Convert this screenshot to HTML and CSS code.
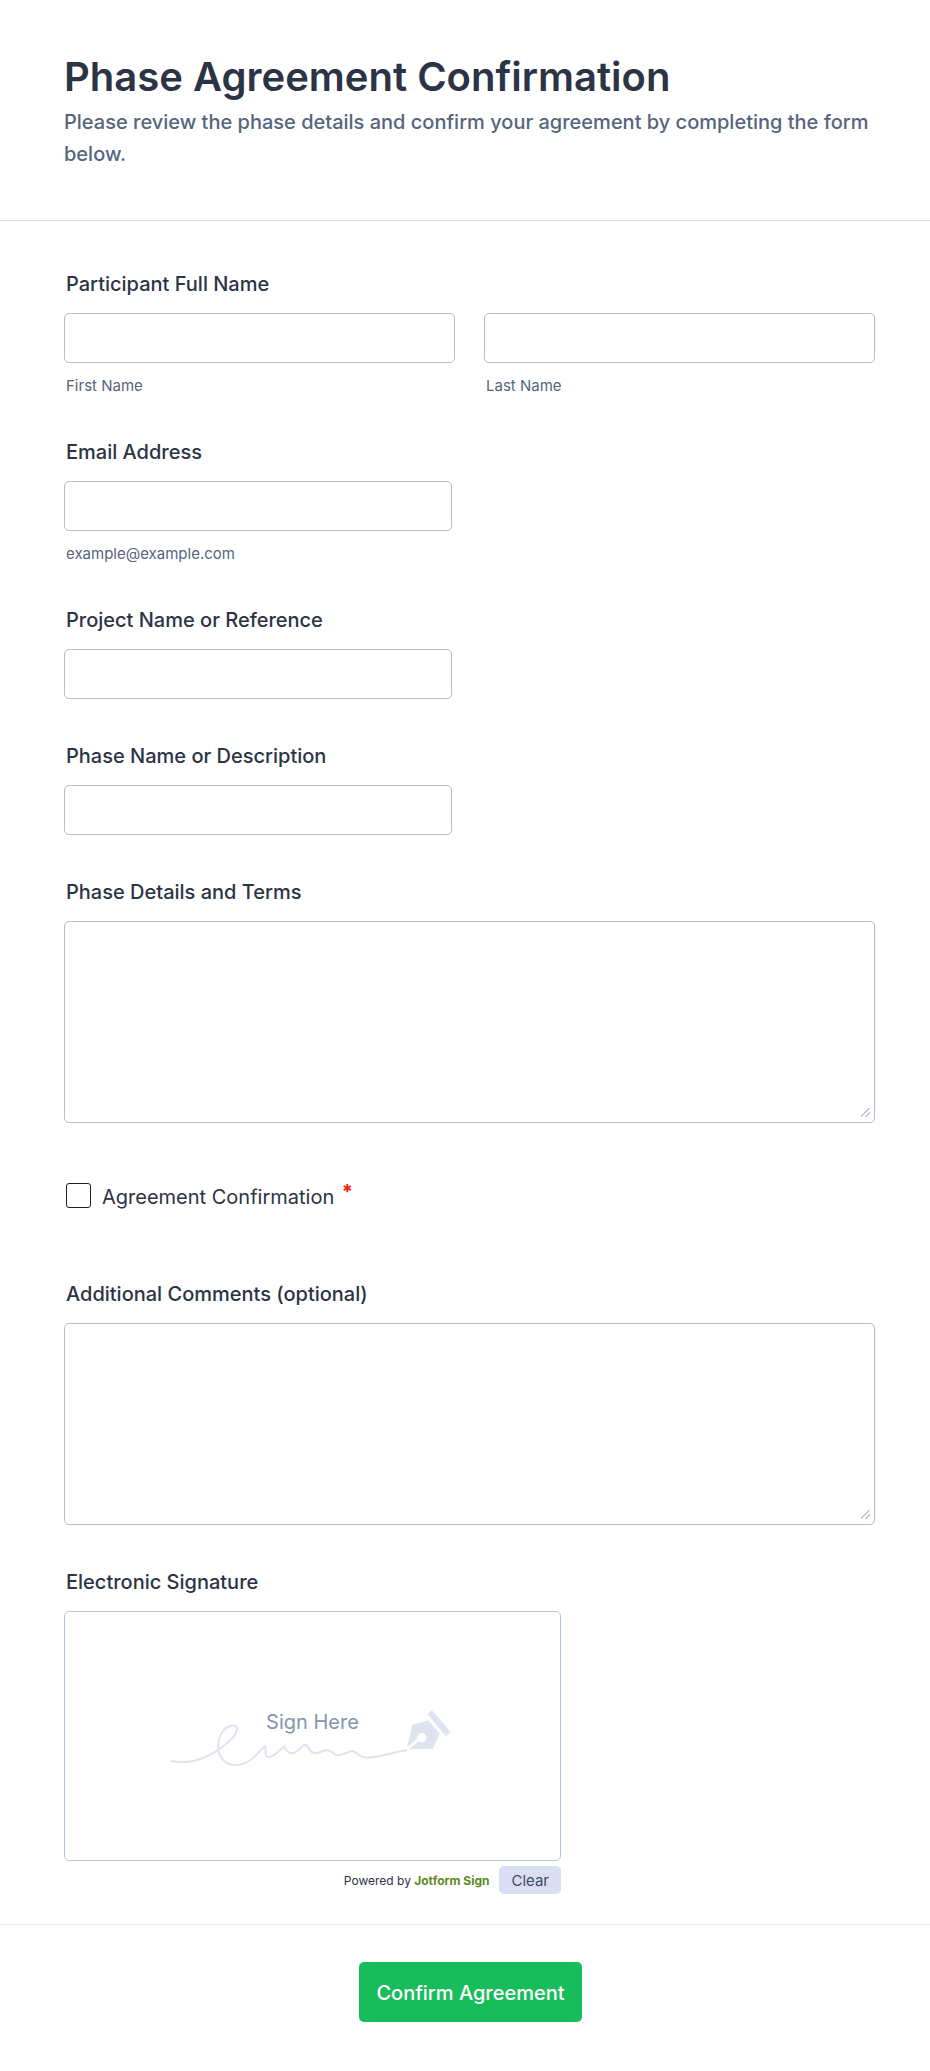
FILE: index.html
```html
<!DOCTYPE html>
<html lang="en">
<head>
  <meta charset="UTF-8">
  <meta name="viewport" content="width=device-width, initial-scale=1.0">
  <title>Phase Agreement Confirmation</title>
  <link rel="stylesheet" href="styles.css">
</head>
<body>
  <form id="agreementForm">
    <header class="form-header">
      <h1>Phase Agreement Confirmation</h1>
      <p>Please review the phase details and confirm your agreement by completing the form below.</p>
    </header>

    <div class="form-body">
      <fieldset class="field">
        <legend class="label">Participant Full Name</legend>
        <div class="name-row">
          <div>
            <input type="text" id="first" name="first">
            <label class="sub-label" for="first">First Name</label>
          </div>
          <div>
            <input type="text" id="last" name="last">
            <label class="sub-label" for="last">Last Name</label>
          </div>
        </div>
      </fieldset>

      <div class="field">
        <label class="label" for="email">Email Address</label>
        <input class="half" type="email" id="email" name="email" aria-describedby="email-hint">
        <span class="sub-label" id="email-hint">example@example.com</span>
      </div>

      <div class="field">
        <label class="label" for="project">Project Name or Reference</label>
        <input class="half" type="text" id="project" name="project">
      </div>

      <div class="field">
        <label class="label" for="phase">Phase Name or Description</label>
        <input class="half" type="text" id="phase" name="phase">
      </div>

      <div class="field">
        <label class="label" for="details">Phase Details and Terms</label>
        <textarea id="details" name="details"></textarea>
      </div>

      <div class="field check-row">
        <input type="checkbox" id="agree" name="agree" required>
        <label for="agree">Agreement Confirmation <span class="required">*</span></label>
      </div>

      <div class="field">
        <label class="label" for="comments">Additional Comments (optional)</label>
        <textarea id="comments" name="comments"></textarea>
      </div>

      <div class="field">
        <div class="label" id="signature-label">Electronic Signature</div>
        <div class="signature">
          <div class="signature-pad" role="img" aria-labelledby="signature-label">
            <svg class="signature-art" viewBox="60 80 846 180" aria-hidden="true">
              <path class="stroke" d="M63 239 C112 248 150 240 201 208 C232 188 263 160 261 141 C258 126 232 132 219 149 C201 174 199 213 218 234 C238 257 272 256 302 236 C322 222 333 201 345 195 C350 205 340 228 357 227 C380 224 388 204 403 196 C407 205 413 217 428 216 C447 213 454 190 466 190 C477 193 474 211 493 215 C511 217 520 205 534 207 C549 209 551 223 567 222 C584 219 594 209 608 210 C625 213 622 228 651 229 C686 229 728 213 768 207"/>
              <path class="fill" d="M832 99 L846 87 L901 151 L888 165 Z"/>
              <path class="fill" d="M787 130 L835 117 L869 157 L849 202 L777 204 L806 179 A14 14 0 1 0 802 172 L771 198 Z"/>
            </svg>
            <span class="signature-hint">Sign Here</span>
          </div>
          <div class="signature-footer">
            <span>Powered by <a href="#">Jotform Sign</a></span>
            <button type="button" class="clear">Clear</button>
          </div>
        </div>
      </div>
    </div>

    <div class="form-footer">
      <button type="submit" class="submit">Confirm Agreement</button>
    </div>
  </form>
</body>
</html>
```
FILE: styles.css
```css
* {
  box-sizing: border-box;
}
body {
  margin: 0;
  background: #fff;
  color: #2c3345;
  font-family: Inter, sans-serif;
  font-size: 20px;
}
h1,
p {
  margin: 0;
}
input,
textarea,
button {
  font-family: inherit;
}
.form-header {
  padding: 52px 55px 50px 64px;
  border-bottom: 1px solid #d7d8e1;
}
h1 {
  font-size: 40px;
  font-weight: 600;
  line-height: 50px;
}
.form-header p {
  margin-top: 4px;
  color: #57647e;
  font-weight: 500;
  line-height: 32px;
}
.form-body {
  display: flex;
  flex-direction: column;
  gap: 45px;
  padding: 51px 55px 30px 64px;
}
.field {
  margin: 0;
  padding: 0;
  border: 0;
  min-width: 0;
}
.label {
  display: block;
  margin-bottom: 16px;
  padding: 0 2px;
  font-weight: 500;
  line-height: 25px;
}
.sub-label {
  display: block;
  margin-top: 13px;
  padding: 0 2px;
  color: #57647e;
  font-size: 15px;
  line-height: 19px;
}
.name-row {
  display: grid;
  grid-template-columns: 1fr 1fr;
  gap: 29px;
}
input[type="text"],
input[type="email"],
textarea {
  display: block;
  width: 100%;
  height: 50px;
  padding: 0 12px;
  border: 1px solid #b8bdc9;
  border-radius: 5px;
  background: #fff;
  color: inherit;
  font-size: 20px;
}
input.half {
  max-width: 388px;
}
textarea {
  height: 202px;
  padding: 12px;
  resize: vertical;
}
textarea::-webkit-resizer {
  background: linear-gradient(135deg, transparent 44%, #bfc3d2 44% 55%, transparent 55% 69%, #bfc3d2 69% 80%, transparent 80%) 2px 1px / 9px 9px no-repeat;
}
.check-row {
  display: flex;
  align-items: center;
  gap: 11px;
  height: 69px;
  padding: 0 2px 14px;
}
.check-row input {
  appearance: none;
  width: 25px;
  height: 25px;
  margin: 0;
  border: 1px solid #1c1b26;
  border-radius: 3px;
}
.check-row input:checked {
  background: #2c3345;
}
.required {
  margin-left: 2px;
  color: #ff1a1a;
  font-weight: 700;
  line-height: 1;
  vertical-align: 5px;
}
.signature {
  max-width: 497px;
}
.signature-pad {
  position: relative;
  display: flex;
  align-items: center;
  justify-content: center;
  height: 250px;
  padding-top: 3px;
  padding-right: 3px;
  border: 1px solid #b4c6e4;
  border-radius: 5px;
}
.signature-art {
  width: 282px;
  height: 60px;
}
.signature-art .stroke {
  fill: none;
  stroke: #dfe3ef;
  stroke-width: 6;
  stroke-linecap: round;
}
.signature-art .fill {
  fill: #dfe3ef;
}
.signature-hint {
  position: absolute;
  top: 98px;
  left: 0;
  right: 0;
  color: #8494ae;
  line-height: 24px;
  text-align: center;
}
.signature-footer {
  display: flex;
  align-items: center;
  justify-content: flex-end;
  gap: 10px;
  margin-top: 5px;
  font-size: 12px;
}
.signature-footer a {
  color: #5d8a1e;
  font-weight: 700;
  text-decoration: none;
}
.clear {
  height: 28px;
  padding: 0 12px;
  border: 0;
  border-radius: 5px;
  background: #dadef3;
  color: #3f4b67;
  font-size: 15px;
}
.form-footer {
  display: flex;
  justify-content: center;
  padding: 37px 53px 49px 64px;
  border-top: 1px solid #e7e8f0;
}
.submit {
  height: 60px;
  padding: 1px 17px 0;
  border: 0;
  border-radius: 5px;
  background: #18bd5b;
  color: #fff;
  font-size: 20px;
  font-weight: 500;
}
```
